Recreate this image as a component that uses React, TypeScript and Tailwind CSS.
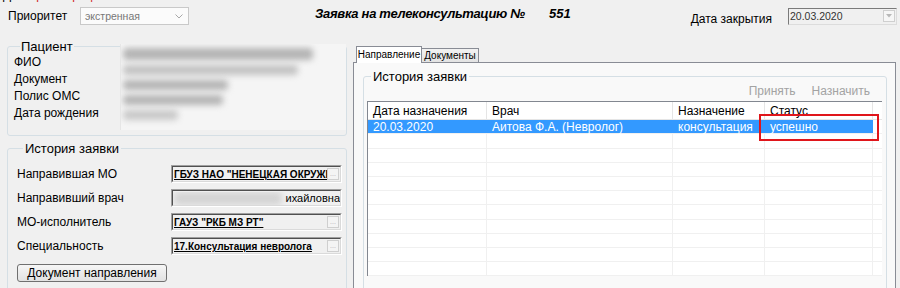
import React from 'react';

const rowHeights = ['h-[14px]', 'h-[15px]', 'h-[14px]', 'h-[14px]', 'h-[14px]', 'h-[14px]', 'h-[15px]', 'h-[14px]', 'h-[14px]', 'h-[14px]', 'h-[14px]'];

const columns = [
  { title: 'Дата назначения', w: 'w-[119px]' },
  { title: 'Врач', w: 'w-[186px]' },
  { title: 'Назначение', w: 'w-[92px]' },
  { title: 'Статус', w: 'w-[108px]' },
];

const selected = ['20.03.2020', 'Аитова Ф.А. (Невролог)', 'консультация', 'успешно'];

// поле только для чтения с кнопкой "..."
const Field = ({ children, button = true }: { children: React.ReactNode; button?: boolean }) => (
  <div className="w-[171px] h-[18px] border-t border-l border-t-[#a0a0a0] border-l-[#a0a0a0] border-r border-b border-r-white border-b-white">
    <div className="flex items-center h-full border-t border-l border-t-[#505050] border-l-[#505050] border-r border-b border-r-[#dadada] border-b-[#dadada] bg-[#f0f0f0] overflow-hidden">
      <div className="flex-1 min-w-0 overflow-hidden whitespace-nowrap pl-[1px]">{children}</div>
      {button && (
        <div className="w-[12px] h-[12px] mr-[1px] shrink-0 border border-[#cfcfcf] bg-[#f4f4f4] text-[7px] leading-[10px] text-[#b0b0b0] text-center">
          ...
        </div>
      )}
    </div>
  </div>
);

const BoldLink = ({ text }: { text: string }) => (
  <span className="text-[10px] font-bold underline text-black">{text}</span>
);

const Blur = ({ w, h = 'h-[11px]', c = 'bg-[#b4b4b4]' }: { w: string; h?: string; c?: string }) => (
  <div className={`${w} ${h} ${c} blur-[3px] rounded-sm`} />
);

export default function App() {
  return (
    <div className="w-[900px] h-[288px] overflow-hidden bg-[#f0f0f0] text-black text-[12px] leading-none font-['Liberation_Sans',Arial,sans-serif]">
      {/* обрезанная верхняя строка */}
      <div className="h-[3px] overflow-hidden pl-[3px]">
        <div className="-mt-[12px] leading-[14px] whitespace-nowrap">
          Д <span className="text-[#d02020]">ата регистрации заявки</span>
        </div>
      </div>

      {/* верхняя строка */}
      <div className="flex items-start h-[37px] pr-[3px]">
        <div className="w-[72px] ml-[8px] mt-[4px] h-[18px] flex items-center">Приоритет</div>
        <div className="w-[109px] h-[18px] mt-[4px] border border-[#c9c9c9] bg-[#fbfbfb] flex items-center px-[4px] text-[10.5px] text-[#777]">
          <span className="flex-1">экстренная</span>
          <svg width="8" height="5" viewBox="0 0 8 5" className="mr-[1px]">
            <path d="M0.5 0.5 L4 4 L7.5 0.5" fill="none" stroke="#a8a8a8" strokeWidth="1" />
          </svg>
        </div>
        <div className="ml-[126px] mt-[3px] w-[234px] whitespace-nowrap text-[13px] tracking-[-0.3px] font-bold italic leading-[16px]">
          Заявка на телеконсультацию №
        </div>
        <div className="mt-[3px] text-[13px] font-bold italic leading-[16px]">551</div>
        <div className="ml-auto mt-[10px] leading-[12px]">Дата закрытия</div>
        <div className="ml-[16px] mt-[5px] w-[109px] h-[17px] border-t border-l border-t-[#7a7a7a] border-l-[#7a7a7a] border-r border-b border-r-[#dcdcdc] border-b-[#dcdcdc] bg-[#f0f0f0] flex items-start">
          <span className="flex-1 pl-[1px] pt-[2px] text-[10.5px] text-[#333]">20.03.2020</span>
          <div className="w-[12px] h-[12px] mt-[1px] mr-[1px] border border-[#cfcfcf] bg-[#f6f6f6] flex items-center justify-center">
            <svg width="6" height="4" viewBox="0 0 6 4">
              <path d="M0 0 H6 L3 3.5 Z" fill="#b8b8b8" />
            </svg>
          </div>
        </div>
      </div>

      {/* основная часть */}
      <div className="flex">
        {/* левая колонка */}
        <div className="w-[340px] ml-[7px] flex flex-col">
          <fieldset className="h-[96px] border border-[#d5dfe5] rounded-[3px] pl-[6px]">
            <legend className="ml-[6px] px-[1px] text-[13px] leading-[13px]">Пациент</legend>
            <div className="flex">
              <div className="w-[106px] flex flex-col">
                <div className="h-[17px] flex items-center">ФИО</div>
                <div className="h-[17px] flex items-center">Документ</div>
                <div className="h-[17px] flex items-center">Полис ОМС</div>
                <div className="h-[17px] flex items-center">Дата рождения</div>
              </div>
              <div className="flex-1 -mt-[9px] h-[86px] bg-[#f5f5f5] border-l border-[#e6e6e6] flex flex-col gap-[5px] pt-[4px] pl-[2px] overflow-hidden">
                <Blur w="w-[190px]" h="h-[12px]" />
                <Blur w="w-[175px]" h="h-[10px]" c="bg-[#c2c2c2]" />
                <Blur w="w-[105px]" h="h-[10px]" />
                <Blur w="w-[100px]" h="h-[10px]" />
                <Blur w="w-[55px]" h="h-[10px]" c="bg-[#c8c8c8]" />
              </div>
            </div>
          </fieldset>

          <fieldset className="mt-[6px] h-[160px] border border-[#d5dfe5] rounded-[3px] pl-[9px] pr-[4px]">
            <legend className="ml-[6px] px-[2px] text-[13px] leading-[13px]">История заявки</legend>
            <div className="flex flex-col gap-[6px] pt-[10px]">
              <div className="flex items-center h-[18px]">
                <div className="w-[154px]">Направившая МО</div>
                <Field><BoldLink text={'ГБУЗ НАО "НЕНЕЦКАЯ ОКРУЖНАЯ БОЛЬНИЦА"'} /></Field>
              </div>
              <div className="flex items-center h-[18px]">
                <div className="w-[154px]">Направивший врач</div>
                <Field button={false}>
                  <div className="flex items-center">
                    <Blur w="w-[116px]" h="h-[13px]" c="bg-[#d4d4d4]" />
                    <span className="ml-[4px] text-[11px]">ихайловна</span>
                  </div>
                </Field>
              </div>
              <div className="flex items-center h-[18px]">
                <div className="w-[154px]">МО-исполнитель</div>
                <Field><BoldLink text={'ГАУЗ "РКБ МЗ РТ"'} /></Field>
              </div>
              <div className="flex items-center h-[18px]">
                <div className="w-[154px]">Специальность</div>
                <Field><BoldLink text="17.Консультация невролога" /></Field>
              </div>
            </div>
            <button className="mt-[9px] w-[150px] h-[18px] rounded-[3px] border border-[#707070] bg-gradient-to-b from-[#f6f6f6] to-[#e2e2e2] text-[12px] text-black leading-none">
              Документ направления
            </button>
          </fieldset>
        </div>

        {/* правая колонка: вкладки */}
        <div className="ml-[6px] w-[543px] flex flex-col">
          <div className="flex items-end h-[22px] pl-[3px]">
            <div className="h-[17px] w-[66px] border border-b-0 border-[#898c95] bg-white text-[10px] flex items-center justify-center relative top-px">
              Направление
            </div>
            <div className="h-[14px] w-[57px] border border-b-0 border-l-0 border-[#898c95] bg-gradient-to-b from-[#f2f2f2] to-[#e3e3e3] text-[10px] flex items-center justify-center">
              Документы
            </div>
          </div>
          <div className="h-[230px] border border-[#898c95] bg-[#f9f9f9] pl-[9px] pr-[8px] pt-[7px]">
            <fieldset className="h-[240px] border border-[#d5dfe5] rounded-[3px] pl-[3px] pr-[4px]">
              <legend className="ml-[4px] px-[2px] text-[13px] leading-[13px]">История заявки</legend>
              <div className="h-[16px] flex items-center justify-end gap-[16px] pr-[12px] text-[#a3a3a3]">
                <span>Принять</span>
                <span>Назначить</span>
              </div>
              <div className="relative mt-[2px] border-t border-l border-[#828790] bg-white">
                <div className="flex h-[18px] border-b border-[#e5e5e5]">
                  {columns.map((c) => (
                    <div key={c.title} className={`${c.w} border-r border-[#e5e5e5] pl-[5px] flex items-center`}>
                      {c.title}
                    </div>
                  ))}
                  <div className="flex-1" />
                </div>
                {rowHeights.map((h, i) => (
                  <div key={i} className={`flex ${h} border-b border-[#f0f0f0]`}>
                    {columns.map((c, j) => (
                      <div
                        key={c.title}
                        className={`${c.w} border-r flex items-center pl-[5px] whitespace-nowrap ${
                          i === 0 ? 'bg-[#3399ff] text-white border-[#3399ff]' : 'border-[#f0f0f0]'
                        }`}
                      >
                        {i === 0 ? selected[j] : ''}
                      </div>
                    ))}
                    <div className="flex-1" />
                  </div>
                ))}
                {/* красная рамка вокруг статуса */}
                <div className="absolute left-[391px] top-[12px] w-[120px] h-[27px] border-2 border-[#e0161b]" />
              </div>
            </fieldset>
          </div>
        </div>
      </div>
    </div>
  );
}
